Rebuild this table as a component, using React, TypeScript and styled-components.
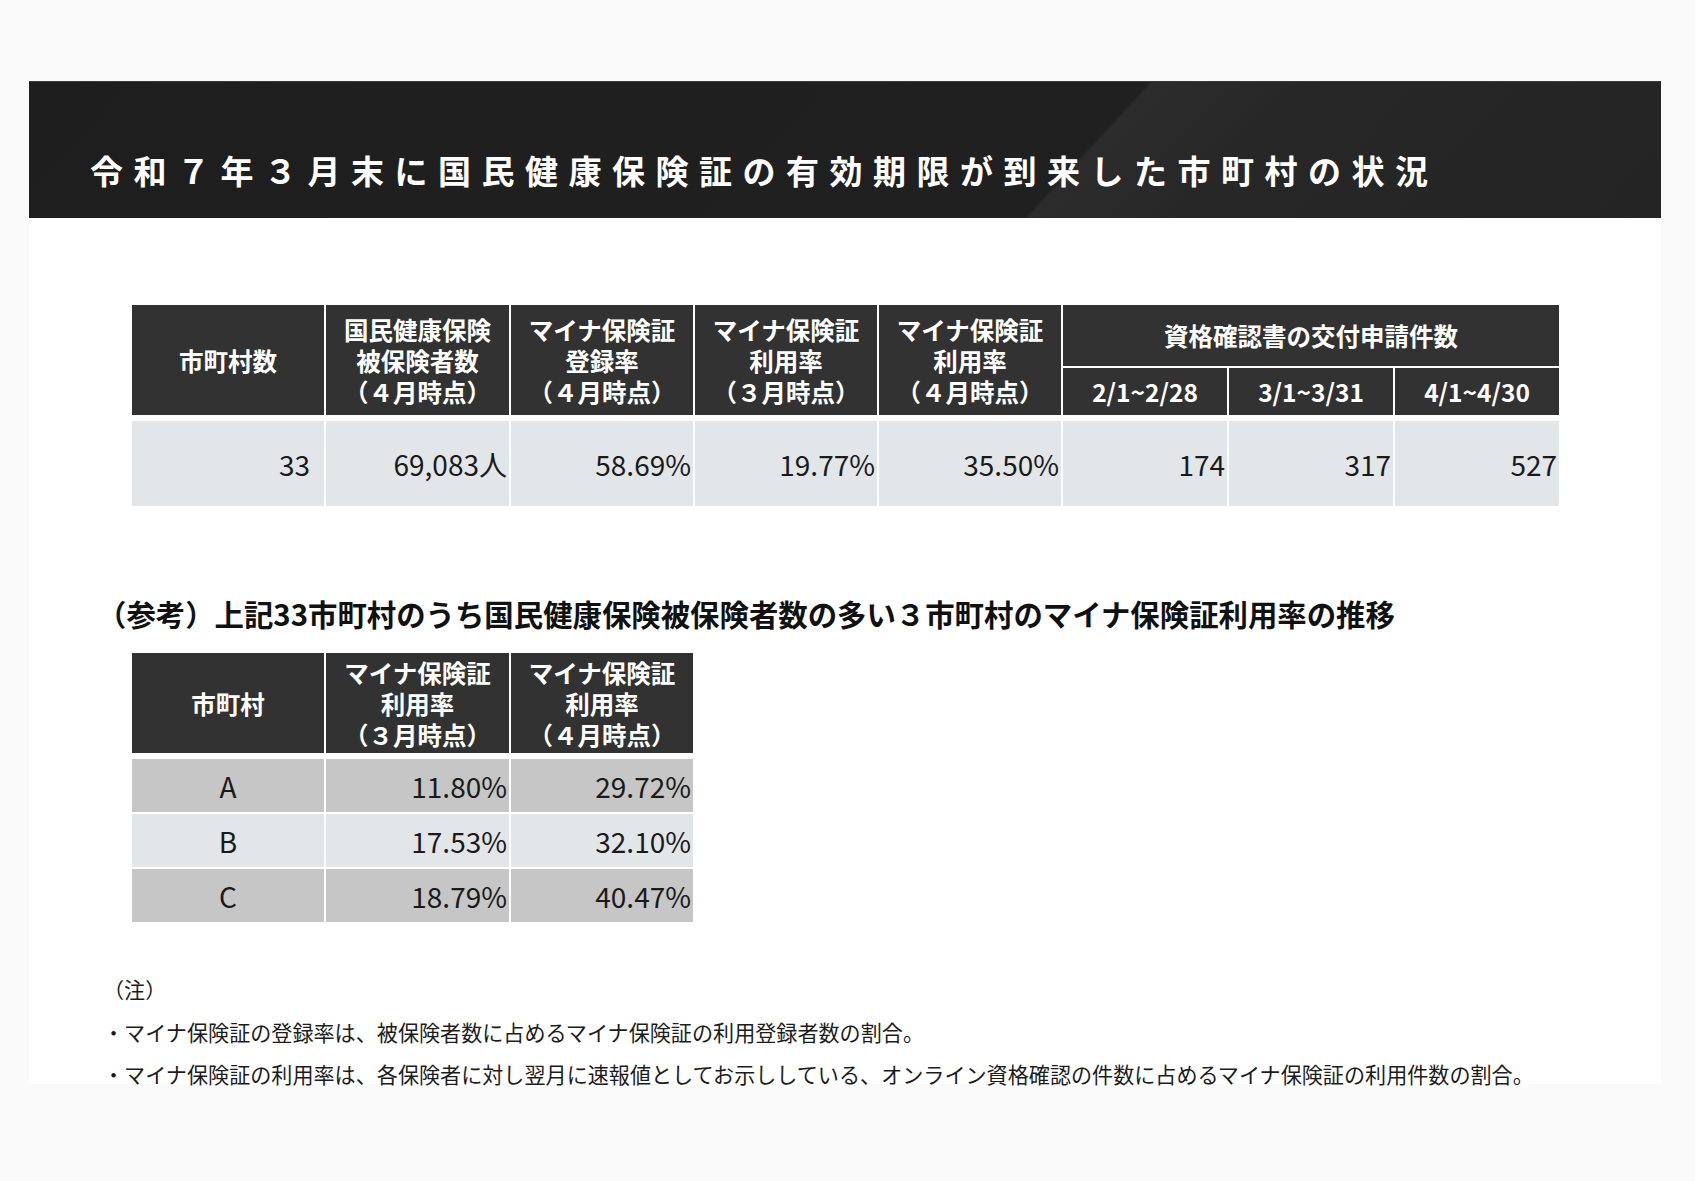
import React from "react";
import styled, { createGlobalStyle } from "styled-components";

const GlobalStyle = createGlobalStyle`
  html, body {
    margin: 0;
    padding: 0;
    background: #fafafa;
  }
  body {
    font-family: "Noto Sans CJK JP", "Noto Sans", sans-serif;
    color: #111;
  }
`;

const Page = styled.div`
  width: 1695px;
  height: 1181px;
  box-sizing: border-box;
  padding: 81px 0 0 29px;
  background: #fafafa;
`;

const Slide = styled.main`
  width: 1632px;
  height: 1003px;
  background: #ffffff;
  display: flex;
  flex-direction: column;
`;

const Banner = styled.header`
  flex: none;
  height: 137px;
  box-sizing: border-box;
  padding: 68px 0 0 61px;
  background-color: #1f1f1f;
  background-image: linear-gradient(
    132.6deg,
    #1e1e1e 0px,
    #202020 824px,
    #2c2c2c 828px,
    #272727 940px,
    #242424 1294px
  );
  border-top: 1px solid #3a3a3a;
`;

const Title = styled.h1`
  margin: 0;
  font-size: 33px;
  line-height: 40px;
  font-weight: 700;
  letter-spacing: 10.5px;
  color: #ffffff;
  white-space: nowrap;
`;

const Body = styled.section`
  flex: none;
  padding-left: 68px;
  display: flex;
  flex-direction: column;
  align-items: flex-start;
`;

const Grid = styled.div<{ $cols: string; $rows: string; $top: number }>`
  flex: none;
  margin: ${(p) => p.$top}px 0 0 35px;
  display: grid;
  grid-template-columns: ${(p) => p.$cols};
  grid-template-rows: ${(p) => p.$rows};
  column-gap: 2px;
  row-gap: 2px;
`;

const HeadCell = styled.div<{ $rowSpan?: number; $colSpan?: number }>`
  grid-row: span ${(p) => p.$rowSpan ?? 1};
  grid-column: span ${(p) => p.$colSpan ?? 1};
  background: #323232;
  color: #ffffff;
  font-weight: 700;
  font-size: 24.5px;
  line-height: 31px;
  display: flex;
  flex-direction: column;
  align-items: center;
  justify-content: center;
  text-align: center;
  white-space: nowrap;
`;

const DataCell = styled.div<{ $tone?: "light" | "dark"; $align?: "right" | "center"; $pad?: number; $first?: boolean }>`
  margin-top: ${(p) => (p.$first ? 4 : 0)}px;
  background: ${(p) => (p.$tone === "dark" ? "#c6c6c6" : "#e3e6e8")};
  color: #1a1a1a;
  font-size: 28px;
  font-weight: 400;
  display: flex;
  align-items: center;
  justify-content: ${(p) => (p.$align === "center" ? "center" : "flex-end")};
  padding-right: ${(p) => p.$pad ?? 2}px;
  white-space: nowrap;
`;

const Heading = styled.h2`
  flex: none;
  margin: 87px 0 0 0;
  font-size: 29.4px;
  line-height: 40px;
  font-weight: 700;
  color: #111;
  white-space: nowrap;
`;

const Notes = styled.div`
  flex: none;
  margin: 46px 0 0 6px;
  font-size: 21.1px;
  line-height: 42.5px;
  color: #1c1c1c;
  white-space: nowrap;
`;

const NoteLine = styled.p`
  margin: 0;
`;

const mainHeaders: string[][] = [
  ["市町村数"],
  ["国民健康保険", "被保険者数", "（４月時点）"],
  ["マイナ保険証", "登録率", "（４月時点）"],
  ["マイナ保険証", "利用率", "（３月時点）"],
  ["マイナ保険証", "利用率", "（４月時点）"],
];

const subHeaders = ["2/1~2/28", "3/1~3/31", "4/1~4/30"];

const mainData = ["33", "69,083人", "58.69%", "19.77%", "35.50%", "174", "317", "527"];

const refHeaders: string[][] = [
  ["市町村"],
  ["マイナ保険証", "利用率", "（３月時点）"],
  ["マイナ保険証", "利用率", "（４月時点）"],
];

const refRows: { name: string; mar: string; apr: string; tone: "light" | "dark" }[] = [
  { name: "A", mar: "11.80%", apr: "29.72%", tone: "dark" },
  { name: "B", mar: "17.53%", apr: "32.10%", tone: "light" },
  { name: "C", mar: "18.79%", apr: "40.47%", tone: "dark" },
];

export default function App() {
  return (
    <Page>
      <GlobalStyle />
      <Slide>
        <Banner>
          <Title>令和７年３月末に国民健康保険証の有効期限が到来した市町村の状況</Title>
        </Banner>
        <Body>
          <Grid
            $top={87}
            $cols="192px 183px 182px 182px 182px 164px 164px 164px"
            $rows="61px 47px 89px"
          >
            {mainHeaders.map((lines, i) => (
              <HeadCell key={i} $rowSpan={2}>
                {lines.map((l, j) => (
                  <span key={j}>{l}</span>
                ))}
              </HeadCell>
            ))}
            <HeadCell $colSpan={3}>資格確認書の交付申請件数</HeadCell>
            {subHeaders.map((s) => (
              <HeadCell key={s}>{s}</HeadCell>
            ))}
            {mainData.map((v, i) => (
              <DataCell key={i} $first $pad={i === 0 ? 14 : 2}>
                {v}
              </DataCell>
            ))}
          </Grid>

          <Heading>（参考）上記33市町村のうち国民健康保険被保険者数の多い３市町村のマイナ保険証利用率の推移</Heading>

          <Grid $top={20} $cols="192px 183px 182px" $rows="100px 57px 53px 53px">
            {refHeaders.map((lines, i) => (
              <HeadCell key={i}>
                {lines.map((l, j) => (
                  <span key={j}>{l}</span>
                ))}
              </HeadCell>
            ))}
            {refRows.map((r, i) => (
              <React.Fragment key={r.name}>
                <DataCell $tone={r.tone} $align="center" $pad={0} $first={i === 0}>
                  {r.name}
                </DataCell>
                <DataCell $tone={r.tone} $first={i === 0}>
                  {r.mar}
                </DataCell>
                <DataCell $tone={r.tone} $first={i === 0}>
                  {r.apr}
                </DataCell>
              </React.Fragment>
            ))}
          </Grid>

          <Notes>
            <NoteLine>（注）</NoteLine>
            <NoteLine>・マイナ保険証の登録率は、被保険者数に占めるマイナ保険証の利用登録者数の割合。</NoteLine>
            <NoteLine>
              ・マイナ保険証の利用率は、各保険者に対し翌月に速報値としてお示ししている、オンライン資格確認の件数に占めるマイナ保険証の利用件数の割合。
            </NoteLine>
          </Notes>
        </Body>
      </Slide>
    </Page>
  );
}
